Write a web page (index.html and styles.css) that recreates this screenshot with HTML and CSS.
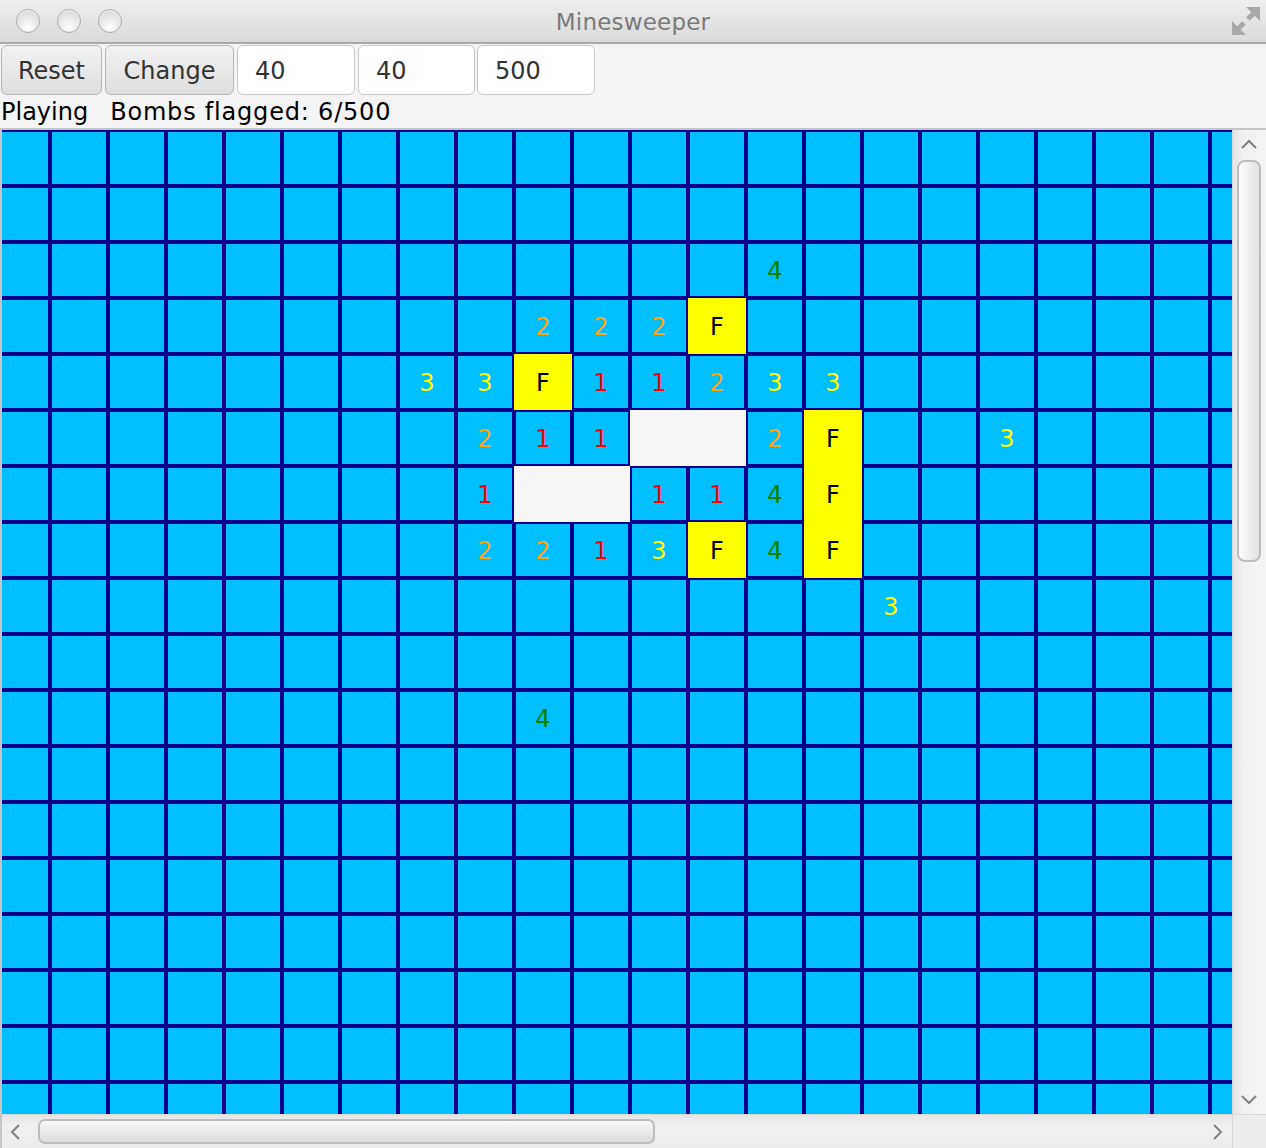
FILE: index.html
```html
<!DOCTYPE html>
<html>
<head>
<meta charset="utf-8">
<title>Minesweeper</title>
<link rel="stylesheet" href="styles.css">
</head>
<body>
<div class="window">
  <div class="titlebar">
    <div class="lights"><span class="light"></span><span class="light"></span><span class="light"></span></div>
    <div class="title">Minesweeper</div>
    <div class="fs">
      <svg width="28" height="28" viewBox="0 0 28 28">
        <polygon points="14,0 28,0 28,14" fill="#a8a8a8"/>
        <line x1="23" y1="5" x2="16" y2="12" stroke="#a8a8a8" stroke-width="5"/>
        <polygon points="0,14 0,28 14,28" fill="#a8a8a8"/>
        <line x1="5" y1="23" x2="12" y2="16" stroke="#a8a8a8" stroke-width="5"/>
      </svg>
    </div>
  </div>
  <div class="toolbar">
    <div class="btn btn-reset">Reset</div>
    <div class="btn btn-change">Change</div>
    <div class="field field-a">40</div>
    <div class="field field-b">40</div>
    <div class="field field-c">500</div>
  </div>
  <div class="status"><span class="state">Playing</span><span class="count">Bombs flagged: 6/500</span></div>
  <div class="pane">
    <div class="viewport">
      <div class="board">
        <!-- row 0 -->
        <i></i><i></i><i></i><i></i><i></i><i></i><i></i><i></i><i></i><i></i><i></i><i></i><i></i><i></i><i></i><i></i><i></i><i></i><i></i><i></i><i></i><i></i>
        <!-- row 1 -->
        <i></i><i></i><i></i><i></i><i></i><i></i><i></i><i></i><i></i><i></i><i></i><i></i><i></i><i></i><i></i><i></i><i></i><i></i><i></i><i></i><i></i><i></i>
        <!-- row 2 -->
        <i></i><i></i><i></i><i></i><i></i><i></i><i></i><i></i><i></i><i></i><i></i><i></i><i></i><i class="g">4</i><i></i><i></i><i></i><i></i><i></i><i></i><i></i><i></i>
        <!-- row 3 -->
        <i></i><i></i><i></i><i></i><i></i><i></i><i></i><i></i><i></i><i class="o">2</i><i class="o">2</i><i class="o">2</i><i class="f">F</i><i></i><i></i><i></i><i></i><i></i><i></i><i></i><i></i><i></i>
        <!-- row 4 -->
        <i></i><i></i><i></i><i></i><i></i><i></i><i></i><i class="y">3</i><i class="y">3</i><i class="f">F</i><i class="r">1</i><i class="r">1</i><i class="o">2</i><i class="y">3</i><i class="y">3</i><i></i><i></i><i></i><i></i><i></i><i></i><i></i>
        <!-- row 5 -->
        <i></i><i></i><i></i><i></i><i></i><i></i><i></i><i></i><i class="o">2</i><i class="r">1</i><i class="r">1</i><i class="w"></i><i class="w"></i><i class="o">2</i><i class="f">F</i><i></i><i></i><i class="y">3</i><i></i><i></i><i></i><i></i>
        <!-- row 6 -->
        <i></i><i></i><i></i><i></i><i></i><i></i><i></i><i></i><i class="r">1</i><i class="w"></i><i class="w"></i><i class="r">1</i><i class="r">1</i><i class="g">4</i><i class="f">F</i><i></i><i></i><i></i><i></i><i></i><i></i><i></i>
        <!-- row 7 -->
        <i></i><i></i><i></i><i></i><i></i><i></i><i></i><i></i><i class="o">2</i><i class="o">2</i><i class="r">1</i><i class="y">3</i><i class="f">F</i><i class="g">4</i><i class="f">F</i><i></i><i></i><i></i><i></i><i></i><i></i><i></i>
        <!-- row 8 -->
        <i></i><i></i><i></i><i></i><i></i><i></i><i></i><i></i><i></i><i></i><i></i><i></i><i></i><i></i><i></i><i class="y">3</i><i></i><i></i><i></i><i></i><i></i><i></i>
        <!-- row 9 -->
        <i></i><i></i><i></i><i></i><i></i><i></i><i></i><i></i><i></i><i></i><i></i><i></i><i></i><i></i><i></i><i></i><i></i><i></i><i></i><i></i><i></i><i></i>
        <!-- row 10 -->
        <i></i><i></i><i></i><i></i><i></i><i></i><i></i><i></i><i></i><i class="g">4</i><i></i><i></i><i></i><i></i><i></i><i></i><i></i><i></i><i></i><i></i><i></i><i></i>
        <!-- row 11 -->
        <i></i><i></i><i></i><i></i><i></i><i></i><i></i><i></i><i></i><i></i><i></i><i></i><i></i><i></i><i></i><i></i><i></i><i></i><i></i><i></i><i></i><i></i>
        <!-- row 12 -->
        <i></i><i></i><i></i><i></i><i></i><i></i><i></i><i></i><i></i><i></i><i></i><i></i><i></i><i></i><i></i><i></i><i></i><i></i><i></i><i></i><i></i><i></i>
        <!-- row 13 -->
        <i></i><i></i><i></i><i></i><i></i><i></i><i></i><i></i><i></i><i></i><i></i><i></i><i></i><i></i><i></i><i></i><i></i><i></i><i></i><i></i><i></i><i></i>
        <!-- row 14 -->
        <i></i><i></i><i></i><i></i><i></i><i></i><i></i><i></i><i></i><i></i><i></i><i></i><i></i><i></i><i></i><i></i><i></i><i></i><i></i><i></i><i></i><i></i>
        <!-- row 15 -->
        <i></i><i></i><i></i><i></i><i></i><i></i><i></i><i></i><i></i><i></i><i></i><i></i><i></i><i></i><i></i><i></i><i></i><i></i><i></i><i></i><i></i><i></i>
        <!-- row 16 -->
        <i></i><i></i><i></i><i></i><i></i><i></i><i></i><i></i><i></i><i></i><i></i><i></i><i></i><i></i><i></i><i></i><i></i><i></i><i></i><i></i><i></i><i></i>
        <!-- row 17 -->
        <i></i><i></i><i></i><i></i><i></i><i></i><i></i><i></i><i></i><i></i><i></i><i></i><i></i><i></i><i></i><i></i><i></i><i></i><i></i><i></i><i></i><i></i>
      </div>
    </div>
    <div class="vscroll">
      <div class="arrow-v"><svg width="16" height="10" viewBox="0 0 16 10"><polyline points="1,9 8,2 15,9" fill="none" stroke="#808080" stroke-width="2"/></svg></div>
      <div class="vthumb"></div>
      <div class="spacer"></div>
      <div class="arrow-v"><svg width="16" height="10" viewBox="0 0 16 10"><polyline points="1,1 8,8 15,1" fill="none" stroke="#808080" stroke-width="2"/></svg></div>
    </div>
    <div class="hscroll">
      <div class="arrow-h arrow-left"><svg width="10" height="16" viewBox="0 0 10 16"><polyline points="9,1 2,8 9,15" fill="none" stroke="#808080" stroke-width="2"/></svg></div>
      <div class="hthumb"></div>
      <div class="spacer"></div>
      <div class="arrow-h arrow-right"><svg width="10" height="16" viewBox="0 0 10 16"><polyline points="1,1 8,8 1,15" fill="none" stroke="#808080" stroke-width="2"/></svg></div>
    </div>
    <div class="corner"></div>
  </div>
</div>
</body>
</html>
```

FILE: styles.css
```css
* { box-sizing: border-box; }
html, body { margin: 0; padding: 0; }
body {
  width: 1266px;
  height: 1148px;
  overflow: hidden;
  background: #f4f4f4;
  font-family: "DejaVu Sans", "Lucida Grande", sans-serif;
}
.window {
  display: flex;
  flex-direction: column;
  height: 1148px;
}

/* title bar */
.titlebar {
  height: 44px;
  flex: none;
  border-bottom: 2px solid #a9a9a9;
  background: linear-gradient(#efefef, #dadada);
  display: grid;
  grid-template-columns: 1fr auto 1fr;
  align-items: center;
}
.lights {
  display: flex;
  gap: 17px;
  padding-left: 16px;
}
.light {
  width: 24px;
  height: 24px;
  border-radius: 50%;
  border: 1px solid #acacac;
  background: radial-gradient(circle at 50% 78%, #fdfdfd 0%, #e8e8e8 50%, #d2d2d2 100%);
  box-shadow: inset 0 1px 1px rgba(255,255,255,0.9);
}
.title {
  font-size: 23px;
  color: #7a7a7a;
  letter-spacing: 0.2px;
  padding-top: 2px;
}
.fs {
  justify-self: end;
  padding-right: 6px;
  display: flex;
}

/* toolbar */
.toolbar {
  height: 52px;
  flex: none;
  display: flex;
  gap: 3px;
  padding: 1px 0 1px 1px;
}
.btn {
  height: 50px;
  border: 1px solid #b6b6b6;
  border-radius: 6px;
  background: linear-gradient(#f2f2f2, #dedede);
  color: #333;
  font-size: 24px;
  display: flex;
  align-items: center;
  justify-content: center;
  padding-top: 2px;
}
.btn-reset { width: 101px; }
.btn-change { width: 129px; }
.field {
  height: 50px;
  background: #fff;
  border: 1px solid #c8c8c8;
  border-radius: 6px;
  color: #333;
  font-size: 24px;
  display: flex;
  align-items: center;
  padding-left: 17px;
  padding-top: 2px;
}
.field-a { width: 118px; }
.field-b { width: 117px; }
.field-c { width: 118px; margin-left: -1px; }

/* status line */
.status {
  height: 32px;
  flex: none;
  font-size: 24px;
  line-height: 32px;
  color: #000;
  padding-left: 1px;
  white-space: nowrap;
}
.state { margin-right: 22px; }
.count { letter-spacing: 0.8px; }

/* scroll pane */
.pane {
  flex: 1;
  display: grid;
  grid-template-columns: 1230px 34px;
  grid-template-rows: 984px 34px;
  border-top: 2px solid #c6c6c6;
  border-left: 2px solid #c6c6c6;
}
.viewport {
  overflow: hidden;
  background: #00bfff;
}
.board {
  display: grid;
  grid-template-columns: repeat(22, 58px);
  grid-auto-rows: 56px;
  margin-left: -10px;
  width: 1276px;
}
.board i {
  font-style: normal;
  border: 2px solid #00008b;
  background: #00bfff;
  display: flex;
  align-items: center;
  justify-content: center;
  padding-top: 2px;
  font-family: "DejaVu Sans", sans-serif;
  font-size: 24px;
  color: #000;
}
.board i.o { color: #ffa500; }
.board i.r { color: #ff0000; }
.board i.y { color: #ffff00; }
.board i.g { color: #008000; }
.board i.f {
  background: #ffff00;
  border-color: #ffff00;
  color: #000;
}
.board i.w {
  background: #f6f6f6;
  border-color: #f6f6f6;
}

/* scrollbars */
.vscroll {
  display: flex;
  flex-direction: column;
  background: linear-gradient(to right, #e4e4e4, #f1f1f1 30%, #f3f3f3);
  border-left: 1px solid #d8d8d8;
}
.arrow-v {
  height: 28px;
  flex: none;
  display: flex;
  align-items: center;
  justify-content: center;
  padding-right: 1px;
}
.vthumb {
  flex: none;
  height: 402px;
  width: 24px;
  margin: 2px 0 0 4px;
  border: 2px solid #bdbdbd;
  border-radius: 8px;
  background: linear-gradient(to right, #fbfbfb, #e2e2e2);
}
.spacer { flex: 1; }
.hscroll {
  display: flex;
  align-items: center;
  background: linear-gradient(#e4e4e4, #f0f0f0 30%, #ececec);
  border-top: 1px solid #d8d8d8;
}
.arrow-h {
  flex: none;
  height: 100%;
  display: flex;
  align-items: center;
  justify-content: center;
}
.arrow-left { width: 26px; }
.arrow-right { width: 28px; }
.hthumb {
  flex: none;
  width: 617px;
  height: 25px;
  margin-left: 10px;
  border: 2px solid #bdbdbd;
  border-radius: 7px;
  background: linear-gradient(#f8f8f8, #dcdcdc);
}
.corner {
  background: #ececec;
  border-top: 1px solid #d8d8d8;
  border-left: 1px solid #d8d8d8;
}
```
